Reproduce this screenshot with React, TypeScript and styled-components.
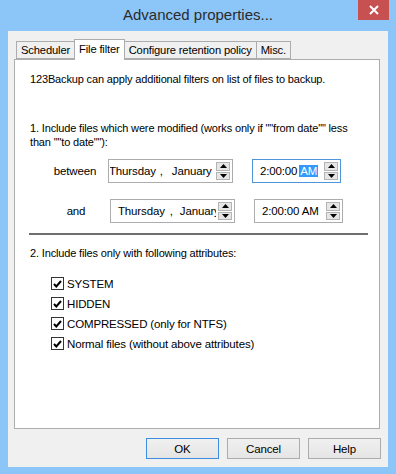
import React from "react";
import styled, { createGlobalStyle } from "styled-components";

const GlobalStyle = createGlobalStyle`
  html, body {
    margin: 0;
    padding: 0;
    background: #8cc6f8;
  }
  * {
    box-sizing: border-box;
  }
`;

const ui = `"Liberation Sans", Arial, sans-serif`;

const Window = styled.div`
  width: 396px;
  height: 474px;
  background: #8cc6f8;
  display: flex;
  flex-direction: column;
  font-family: ${ui};
  font-size: 11px;
  letter-spacing: -0.15px;
  color: #000;
`;

const TitleBar = styled.div`
  height: 31px;
  display: grid;
  grid-template-columns: 1fr auto 1fr;
  align-items: center;
`;

const Title = styled.div`
  grid-column: 2;
  font-size: 15px;
  letter-spacing: 0;
  color: #2b2b2b;
  padding-bottom: 2px;
`;

const CloseButton = styled.div`
  grid-column: 3;
  justify-self: end;
  align-self: start;
  margin-right: 7px;
  width: 31px;
  height: 20px;
  background: #c75050;
  display: flex;
  align-items: center;
  justify-content: center;
`;

const Body = styled.div`
  flex: 1;
  margin: 0 8px 7px;
  background: #f0f0f0;
  padding: 7px 8px 0 6px;
  display: flex;
  flex-direction: column;
`;

const TabRow = styled.div`
  display: flex;
  align-items: flex-end;
  padding-left: 2px;
  height: 21px;
  position: relative;
  z-index: 1;
`;

const Tab = styled.div<{ $active?: boolean }>`
  height: ${(p) => (p.$active ? "21px" : "18px")};
  padding: ${(p) => (p.$active ? "3px 4px 0" : "2px 4px 0")};
  margin-bottom: ${(p) => (p.$active ? "-1px" : "0")};
  background: ${(p) => (p.$active ? "#fff" : "#f0f0f0")};
  border: 1px solid #acacac;
  border-bottom: ${(p) => (p.$active ? "none" : "1px solid #acacac")};
  margin-right: -1px;
  white-space: nowrap;
  font-size: 11.2px;
`;

const Panel = styled.div`
  height: 370px;
  background: #fff;
  border: 1px solid #adadad;
  padding: 12px 0 0 15px;
  display: flex;
  flex-direction: column;
`;

const Line = styled.div<{ $top?: number }>`
  margin-top: ${(p) => p.$top ?? 0}px;
  line-height: 14px;
  white-space: nowrap;
`;

const DateRow = styled.div<{ $top: number; $shift: number }>`
  display: flex;
  align-items: center;
  margin-top: ${(p) => p.$top}px;
  padding-left: ${(p) => p.$shift}px;
`;

const RowLabel = styled.div<{ $nudge: number }>`
  width: 78px;
  padding-left: ${(p) => 12 - p.$nudge}px;
  text-align: center;
  font-size: 11.5px;
`;

const Field = styled.div<{ $width: number; $focus?: boolean; $pad: number }>`
  width: ${(p) => p.$width}px;
  height: 24px;
  border: 1px solid ${(p) => (p.$focus ? "#4f95dc" : "#acacac")};
  background: #fff;
  display: flex;
  align-items: center;
  padding-left: ${(p) => p.$pad}px;
  padding-right: 2px;
  overflow: hidden;
  white-space: nowrap;
  font-size: 11.5px;
  & + & {
    margin-left: 19px;
  }
`;

const FieldText = styled.div`
  flex: 1;
  overflow: hidden;
  display: flex;
  align-items: center;
`;

const Caret = styled.span`
  display: inline-block;
  width: 1px;
  height: 14px;
  background: #000;
  margin-right: -1px;
`;

const Sep = styled.span<{ $gap: number }>`
  margin: 0 ${(p) => p.$gap}px;
`;

const Selected = styled.span`
  background: #3399ff;
  color: #fff;
  padding: 0 1px;
  margin-left: 2px;
`;

const Spinner = styled.div`
  width: 14px;
  height: 18px;
  display: flex;
  flex-direction: column;
  gap: 1px;
  margin-left: 2px;
`;

const SpinButton = styled.div`
  flex: 1;
  background: #e6e6e6;
  border: 1px solid #b4b4b4;
  display: flex;
  align-items: center;
  justify-content: center;
`;

const Divider = styled.div`
  margin-top: 10px;
  width: 339px;
  height: 2px;
  margin-left: -1px;
  border-top: 2px solid #6e6e6e;
`;

const CheckList = styled.div`
  display: flex;
  flex-direction: column;
  gap: 7px;
  margin-top: 17px;
  padding-left: 21px;
`;

const CheckRow = styled.div`
  display: flex;
  align-items: center;
  gap: 3px;
  height: 13px;
  white-space: nowrap;
  font-size: 11.5px;
`;

const Box = styled.div`
  width: 13px;
  height: 13px;
  border: 1px solid #333;
  background: #fff;
  display: flex;
  align-items: center;
  justify-content: center;
`;

const ButtonRow = styled.div`
  display: flex;
  justify-content: flex-end;
  gap: 8px;
  margin-top: 9px;
  margin-right: -1px;
`;

const Button = styled.div<{ $default?: boolean }>`
  width: 73px;
  height: 21px;
  border: 1px solid ${(p) => (p.$default ? "#3d8ee2" : "#acacac")};
  background: linear-gradient(#f0f0f0, #e5e5e5);
  display: flex;
  align-items: center;
  justify-content: center;
  font-size: 11.5px;
`;

const Arrow = ({ up }: { up?: boolean }) => (
  <svg width="7" height="4" viewBox="0 0 7 4">
    <polygon points={up ? "3.5,0 7,4 0,4" : "0,0 7,0 3.5,4"} fill="#000" />
  </svg>
);

const Spin = () => (
  <Spinner>
    <SpinButton>
      <Arrow up />
    </SpinButton>
    <SpinButton>
      <Arrow />
    </SpinButton>
  </Spinner>
);

const Check = () => (
  <Box>
    <svg width="9" height="8" viewBox="0 0 9 8">
      <path d="M1 4 L3.3 6.5 L8 1" stroke="#000" strokeWidth="2" fill="none" />
    </svg>
  </Box>
);

const attributes = [
  "SYSTEM",
  "HIDDEN",
  "COMPRESSED (only for NTFS)",
  "Normal files (without above attributes)",
];

export default function App() {
  return (
    <>
      <GlobalStyle />
      <Window>
        <TitleBar>
          <Title>Advanced properties...</Title>
          <CloseButton>
            <svg width="10" height="10" viewBox="0 0 10 10">
              <path d="M1 1 L9 9 M9 1 L1 9" stroke="#fff" strokeWidth="2" />
            </svg>
          </CloseButton>
        </TitleBar>
        <Body>
          <TabRow>
            <Tab>Scheduler</Tab>
            <Tab $active>File filter</Tab>
            <Tab>Configure retention policy</Tab>
            <Tab>Misc.</Tab>
          </TabRow>
          <Panel>
            <Line>123Backup can apply additional filters on list of files to backup.</Line>
            <Line $top={35}>1. Include files which were modified (works only if ""from date"" less</Line>
            <Line>than ""to date""):</Line>
            <DateRow $top={10} $shift={0}>
              <RowLabel $nudge={0}>between</RowLabel>
              <Field $width={125} $pad={1}>
                <FieldText>
                  <Caret />
                  Thursday<Sep $gap={4}>,</Sep>
                  <Sep $gap={5}>January</Sep>
                </FieldText>
                <Spin />
              </Field>
              <Field $width={89} $focus $pad={7}>
                <FieldText>
                  2:00:00<Selected>AM</Selected>
                </FieldText>
                <Spin />
              </Field>
            </DateRow>
            <DateRow $top={16} $shift={2}>
              <RowLabel $nudge={2}>and</RowLabel>
              <Field $width={125} $pad={7}>
                <FieldText>
                  Thursday<Sep $gap={5}>,</Sep>
                  <Sep $gap={2}>January</Sep>
                </FieldText>
                <Spin />
              </Field>
              <Field $width={89} $pad={7}>
                <FieldText>2:00:00 AM</FieldText>
                <Spin />
              </Field>
            </DateRow>
            <Divider />
            <Line $top={11}>2. Include files only with following attributes:</Line>
            <CheckList>
              {attributes.map((a) => (
                <CheckRow key={a}>
                  <Check />
                  {a}
                </CheckRow>
              ))}
            </CheckList>
          </Panel>
          <ButtonRow>
            <Button $default>OK</Button>
            <Button>Cancel</Button>
            <Button>Help</Button>
          </ButtonRow>
        </Body>
      </Window>
    </>
  );
}
